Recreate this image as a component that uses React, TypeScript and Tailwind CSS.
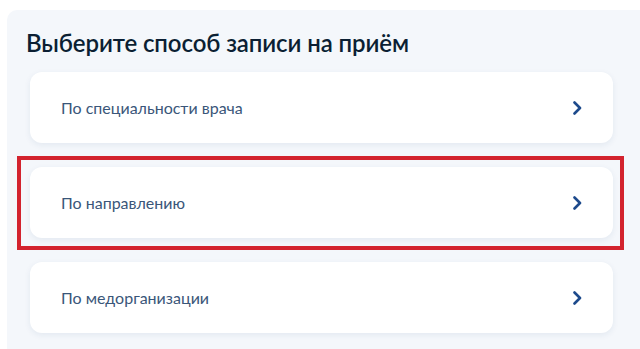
const items = [
  { label: 'По специальности врача', marked: false },
  { label: 'По направлению', marked: true },
  { label: 'По медорганизации', marked: false },
];

function Chevron() {
  return (
    <svg width="10" height="14" viewBox="0 0 10 14" fill="none" className="shrink-0">
      <path d="M2.5 1.5 L8 7 L2.5 12.5" stroke="#1d4a8c" strokeWidth="2.6" strokeLinecap="round" strokeLinejoin="round" />
    </svg>
  );
}

export default function App() {
  return (
    <div className="w-[640px] h-[349px] bg-white overflow-hidden pt-[10px] pl-[7px] font-['Lato','Noto_Sans',sans-serif]">
      <div className="bg-[#f4f7fb] rounded-tl-[10px] h-full pl-[23px] pr-[27px] pt-[18px]">
        <h1 className="text-[24px] leading-[30px] font-semibold text-[#0b1f33] -ml-[4px] tracking-[-0.1px]">
          Выберите способ записи на приём
        </h1>
        <div className="mt-[14px] flex flex-col gap-[24px]">
          {items.map((item) => (
            <div key={item.label} className="relative">
              <div className="h-[71px] bg-white rounded-[12px] shadow-[0_2px_6px_rgba(30,60,110,0.08)] flex items-center justify-between pl-[31px] pr-[31px]">
                <span className="text-[16px] text-[#3a5679]">{item.label}</span>
                <Chevron />
              </div>
              {item.marked && (
                <div className="absolute -top-[11px] -bottom-[12px] -left-[13px] -right-[11px] border-[4px] border-[#d3232e] pointer-events-none" />
              )}
            </div>
          ))}
        </div>
      </div>
    </div>
  );
}
